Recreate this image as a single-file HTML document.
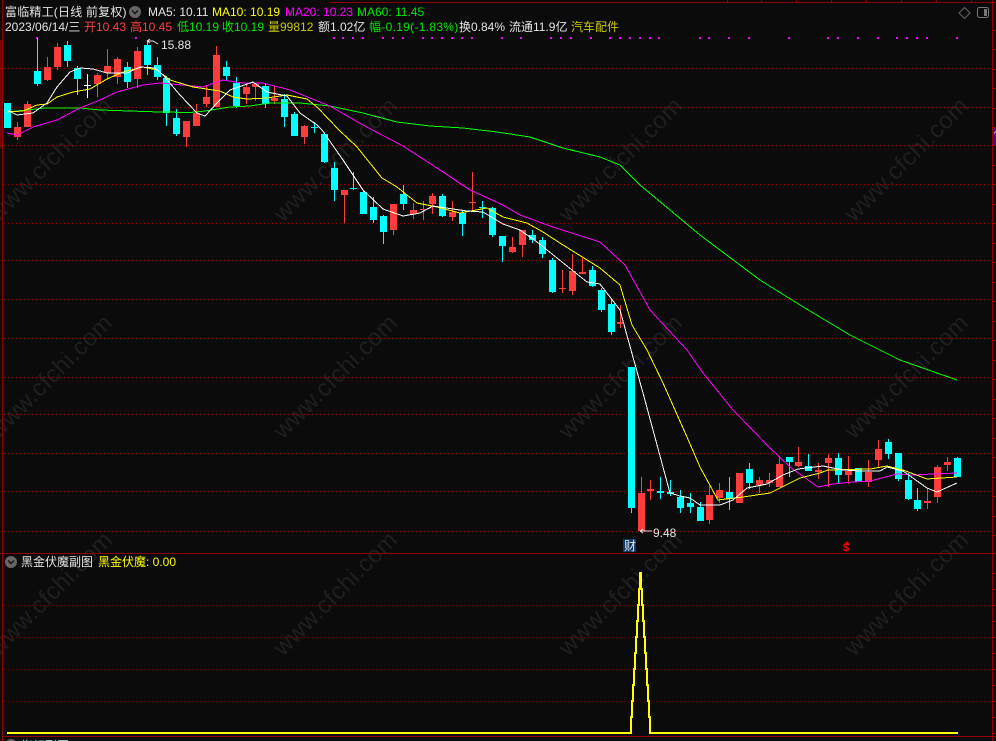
<!DOCTYPE html>
<html><head><meta charset="utf-8"><style>
html,body{margin:0;padding:0;background:#0b0b0b}
#a{position:relative;width:996px;height:741px;overflow:hidden;background:#0b0b0b;font:12px "Liberation Sans","WenQuanYi Zen Hei","Noto Sans CJK SC",sans-serif}
svg{position:absolute;left:0;top:0}
.t{position:absolute;white-space:pre;line-height:14px;height:14px;letter-spacing:0}
.w{color:#e4e4e4}.y{color:#ffff00}.m{color:#ff00ff}.g{color:#00e600}.r{color:#ff4040}.o{color:#c8c800}
</style></head><body><div id="a">
<svg width="996" height="741" viewBox="0 0 996 741">
<defs>
<pattern id="d1" width="4" height="1" patternUnits="userSpaceOnUse"><rect width="1" height="1" fill="#a00000"/></pattern>
<pattern id="d2" width="4" height="1" patternUnits="userSpaceOnUse"><rect width="1" height="1" fill="#800000"/></pattern>
</defs>
<g font-family="Liberation Sans,sans-serif" font-size="24" letter-spacing=".4" fill="#1f1f1f">
<text transform="translate(-2 223) rotate(-45)">www.cfchi.com</text>
<text transform="translate(283 223) rotate(-45)">www.cfchi.com</text>
<text transform="translate(568 223) rotate(-45)">www.cfchi.com</text>
<text transform="translate(854 223) rotate(-45)">www.cfchi.com</text>
<text transform="translate(-2 440) rotate(-45)">www.cfchi.com</text>
<text transform="translate(283 440) rotate(-45)">www.cfchi.com</text>
<text transform="translate(568 440) rotate(-45)">www.cfchi.com</text>
<text transform="translate(854 440) rotate(-45)">www.cfchi.com</text>
<text transform="translate(-2 657) rotate(-45)">www.cfchi.com</text>
<text transform="translate(283 657) rotate(-45)">www.cfchi.com</text>
<text transform="translate(568 657) rotate(-45)">www.cfchi.com</text>
<text transform="translate(854 657) rotate(-45)">www.cfchi.com</text>
</g>
<g shape-rendering="crispEdges" fill="none">
<g fill="url(#d1)">
<rect x="4" y="68" width="988" height="1"/><rect x="4" y="107" width="988" height="1"/><rect x="4" y="145" width="988" height="1"/><rect x="4" y="184" width="988" height="1"/><rect x="4" y="223" width="988" height="1"/><rect x="4" y="260" width="988" height="1"/><rect x="4" y="299" width="988" height="1"/><rect x="4" y="338" width="988" height="1"/><rect x="4" y="377" width="988" height="1"/><rect x="4" y="414" width="988" height="1"/><rect x="4" y="453" width="988" height="1"/><rect x="4" y="491" width="988" height="1"/><rect x="4" y="531" width="988" height="1"/>
</g>
<g fill="url(#d2)">
<rect x="4" y="605" width="988" height="1"/><rect x="4" y="637" width="988" height="1"/><rect x="4" y="669" width="988" height="1"/><rect x="4" y="701" width="988" height="1"/>
</g>
<path stroke="#900000" d="M2.5 0V741M992.5 0V741M330 2.5H996M0 553.5H996M2 736.5H996M727.5 0V2M761.5 0V2M796.5 0V2M831.5 0V2M866.5 0V2M901.5 0V2M936.5 0V2M971.5 0V2"/>
<path stroke="#900000" d="M992 30.5h4M992 49.5h4M992 69.5h4M992 88.5h4M992 108.5h4M992 127.5h4M992 145.5h4M992 165.5h4M992 184.5h4M992 204.5h4M992 223.5h4M992 243.5h4M992 262.5h4M992 282.5h4M992 301.5h4M992 321.5h4M992 340.5h4M992 360.5h4M992 379.5h4M992 399.5h4M992 418.5h4M992 438.5h4M992 457.5h4M992 477.5h4M992 496.5h4M992 516.5h4M992 535.5h4M992 573.5h4M992 589.5h4M992 605.5h4M992 621.5h4M992 637.5h4M992 653.5h4M992 669.5h4M992 685.5h4M992 701.5h4M992 717.5h4M992 733.5h4"/>
<rect x="0" y="40" width="2" height="108" fill="#7a0000"/>
<rect x="993" y="128" width="3" height="17" fill="#4a0a80"/>
<path stroke="#fff" d="M994 133h1M995 132h1"/>
<path fill="#ff00ff" d="M36 37h2v2h-2zM135 37h2v2h-2zM333 37h2v2h-2zM342 37h2v2h-2zM352 37h2v2h-2zM362 37h2v2h-2zM382 37h2v2h-2zM392 37h2v2h-2zM402 37h2v2h-2zM422 37h2v2h-2zM431 37h2v2h-2zM441 37h2v2h-2zM451 37h2v2h-2zM461 37h2v2h-2zM471 37h2v2h-2zM501 37h2v2h-2zM520 37h2v2h-2zM550 37h2v2h-2zM560 37h2v2h-2zM570 37h2v2h-2zM590 37h2v2h-2zM609 37h2v2h-2zM619 37h2v2h-2zM629 37h2v2h-2zM639 37h2v2h-2zM649 37h2v2h-2zM658 37h2v2h-2zM699 37h2v2h-2zM708 37h2v2h-2zM728 37h2v2h-2zM748 37h2v2h-2zM788 37h2v2h-2zM827 37h2v2h-2zM837 37h2v2h-2zM857 37h2v2h-2zM877 37h2v2h-2zM896 37h2v2h-2zM906 37h2v2h-2zM916 37h2v2h-2zM926 37h2v2h-2zM956 37h2v2h-2z"/>
<path stroke="#00ffff" d="M37.5 38V86M67.5 41V67M77.5 66V95M127.5 62V88M147.5 40V75M157.5 57V80M166.5 76V126M176.5 109V136M226.5 61V80M236.5 77V108M265.5 84V108M284.5 94V127M294.5 112V136M314.5 122V133M324.5 132V163M334.5 162V201M353.5 172V190M363.5 190V214M373.5 197V223M383.5 215V244M403.5 185V210M442.5 194V217M462.5 211V236M482.5 201V218M492.5 207V237M502.5 236V262M532.5 230V243M542.5 237V258M552.5 258V293M592.5 266V287M601.5 288V312M611.5 298V335M631.5 367V513M660.5 477V499M670.5 480V496M680.5 490V513M690.5 493V513M700.5 502V521M729.5 477V510M749.5 463V489M789.5 457V477M808.5 454V471M838.5 453V483M858.5 468V482M888.5 439V459M898.5 453V481M908.5 473V500M917.5 488V511M957.5 457V477"/>
<path stroke="#ff3c3c" d="M17.5 122V140M27.5 101V127M47.5 57V81M57.5 43V70M97.5 73V97M107.5 49V80M117.5 57V84M137.5 47V88M186.5 121V147M196.5 104V126M206.5 85V107M216.5 46V107M246.5 83V104M255.5 84V101M274.5 86V104M304.5 125V144M344.5 190V223M393.5 204V235M413.5 203V219M423.5 201V220M432.5 193V214M452.5 201V221M472.5 172V211M512.5 237V253M522.5 230V257M562.5 270V293M572.5 254V295M582.5 257V274M620.5 305V328M641.5 477V531M650.5 480V500M709.5 486V524M719.5 483V503M739.5 473V503M759.5 477V493M769.5 473V487M779.5 456V487M798.5 447V467M818.5 463V479M828.5 454V487M848.5 456V484M868.5 460V487M878.5 440V467M927.5 488V509M937.5 465V503M947.5 457V471"/>
<path stroke="#fff" d="M87.5 74V98M84 85.5h7"/>
<path fill="#00ffff" d="M4 103h7v25h-7zM34 71h7v13h-7zM64 45h7v16h-7zM74 68h7v11h-7zM124 67h7v15h-7zM144 45h7v20h-7zM154 65h7v12h-7zM163 78h7v35h-7zM173 118h7v16h-7zM223 67h7v9h-7zM233 83h7v23h-7zM262 86h7v18h-7zM281 99h7v18h-7zM291 114h7v22h-7zM311 127h7v1h-7zM321 134h7v28h-7zM331 168h7v22h-7zM350 188h7v1h-7zM360 192h7v22h-7zM370 207h7v13h-7zM380 216h7v16h-7zM400 194h7v10h-7zM439 196h7v20h-7zM459 213h7v11h-7zM479 207h7v1h-7zM489 208h7v27h-7zM499 236h7v10h-7zM529 235h7v5h-7zM539 240h7v14h-7zM549 260h7v32h-7zM589 270h7v16h-7zM598 290h7v20h-7zM608 304h7v28h-7zM628 367h7v141h-7zM657 491h7v2h-7zM667 492h7v2h-7zM677 497h7v11h-7zM687 503h7v4h-7zM697 507h7v14h-7zM726 492h7v7h-7zM746 469h7v14h-7zM786 457h7v5h-7zM805 466h7v5h-7zM835 458h7v17h-7zM855 468h7v14h-7zM885 442h7v12h-7zM895 453h7v26h-7zM905 480h7v19h-7zM914 500h7v9h-7zM954 458h7v19h-7z"/>
<path fill="#ff3c3c" d="M14 127h7v10h-7zM24 104h7v23h-7zM44 67h7v13h-7zM54 47h7v20h-7zM94 75h7v9h-7zM104 66h7v7h-7zM114 59h7v18h-7zM134 51h7v28h-7zM183 121h7v16h-7zM193 113h7v13h-7zM203 97h7v7h-7zM213 55h7v52h-7zM243 87h7v7h-7zM252 84h7v3h-7zM271 98h7v3h-7zM301 126h7v11h-7zM341 190h7v5h-7zM390 204h7v26h-7zM410 210h7v4h-7zM420 209h7v1h-7zM429 196h7v8h-7zM449 212h7v5h-7zM469 202h7v1h-7zM509 247h7v5h-7zM519 230h7v15h-7zM559 288h7v1h-7zM569 271h7v20h-7zM579 272h7v2h-7zM617 322h7v2h-7zM638 493h7v38h-7zM647 489h7v2h-7zM706 495h7v25h-7zM716 490h7v8h-7zM736 473h7v30h-7zM756 480h7v5h-7zM766 480h7v3h-7zM776 464h7v23h-7zM795 462h7v4h-7zM815 470h7v2h-7zM825 458h7v5h-7zM845 471h7v4h-7zM865 472h7v10h-7zM875 449h7v11h-7zM924 501h7v2h-7zM934 467h7v30h-7zM944 462h7v3h-7z"/>
</g>
<g fill="none" stroke-width="1" shape-rendering="crispEdges">
<polyline stroke="#00ff00" points="7,112 27,110 45,108 80,108 100,110 160,112 190,112.5 205,111 230,107 250,106 270,103 300,103 330,106 363,113 397,122 430,126 463,128 497,132 530,137 563,148 600,157 620,165 640,185 700,235 760,280 800,305 850,335 900,360 957,380"/>
<polyline stroke="#ff00ff" points="7,133 17,135 33,127 57,120 80,108 100,100 117,92 143,85 160,83 183,85 203,87 223,80 243,83 263,83 290,90 310,98 330,106 363,125 403,146 437,168 470,190 503,205 520,215 553,227 600,242 625,265 650,310 687,350 703,373 733,410 770,448 790,467 818,487 833,484 853,482 870,481 897,474 913,475 933,474 957,473"/>
<polyline stroke="#ffff00" points="7,112 23,111 37,105 47,104 57,97 73,92 90,89 107,79 123,72 143,67 157,70 170,80 193,87 220,91 233,97 247,99 267,98 287,95 307,99 317,107 339,130 357,147 382,178 397,187 417,203 437,207 460,213 487,208 503,217 527,223 543,232 563,245 600,268 620,285 632,325 647,350 663,383 687,437 700,467 718,500 743,497 770,493 800,478 820,473 828,470 870,469 887,466 903,470 927,479 957,477"/>
<polyline stroke="#ffffff" points="7,110 17,115 33,113 47,103 57,87 70,72 80,68 93,69 107,73 127,73 140,67 155,68 163,75 180,95 197,113 205,116 217,103 230,90 253,82 267,92 287,96 300,113 317,125 322,130 343,160 363,190 383,209 403,216 420,213 433,206 453,209 467,211 483,212 503,224 520,230 537,242 557,258 587,282 600,284 620,310 631,350 643,393 670,493 680,496 690,498 700,505 720,505 733,500 747,488 767,484 783,475 798,469 823,466 843,470 860,471 880,471 887,467 903,471 927,488 937,492 957,483"/>
</g>
<path fill="none" stroke="#ffff00" stroke-width="2" shape-rendering="crispEdges" d="M7 733H631V717H632V701H633V685H634V669H635V653H636V637H637V621H638V605H639V589H640V573H641V589H642V605H643V621H644V637H645V653H646V669H647V685H648V701H649V717H650V733H958"/>
<path fill="none" stroke="#e0e0e0" d="M147 41L150 39M147 41L150 43M147 41H153L158 44"/>
<path fill="none" stroke="#e0e0e0" d="M640 531L643 529M640 531L643 533M640 531H652"/>
<circle cx="135" cy="12" r="6" fill="#666"/><path d="M132 10.5l3 3 3-3" fill="none" stroke="#111" stroke-width="1.4"/>
<circle cx="11" cy="562" r="6" fill="#666"/><path d="M8 560.5l3 3 3-3" fill="none" stroke="#111" stroke-width="1.4"/>
<circle cx="11" cy="745" r="6" fill="#666"/>
<path d="M964.5 7.5L970 13L964.5 18.5L959 13Z" fill="none" stroke="#666"/>
<rect x="977.5" y="7.5" width="11" height="10" rx="2" fill="none" stroke="#777"/><rect x="984" y="9" width="3" height="7" fill="#777"/>
<rect x="623" y="539" width="13" height="13" fill="#0e3a6a"/>
<path d="M847 541L850 545H844Z" fill="#f00"/>
</svg>
<span class="t w" style="left:5px;top:5px;letter-spacing:.2px">富临精工(日线 前复权)</span>
<span class="t w" style="left:148px;top:5px">MA5: 10.11</span>
<span class="t y" style="left:212px;top:5px">MA10: 10.19</span>
<span class="t m" style="left:285px;top:5px">MA20: 10.23</span>
<span class="t g" style="left:357px;top:5px">MA60: 11.45</span>
<span class="t w" style="left:5px;top:20px">2023/06/14/三</span>
<span class="t r" style="left:84px;top:20px">开10.43</span>
<span class="t r" style="left:130px;top:20px">高10.45</span>
<span class="t g" style="left:177px;top:20px">低10.19</span>
<span class="t g" style="left:222px;top:20px">收10.19</span>
<span class="t o" style="left:268px;top:20px">量99812</span>
<span class="t w" style="left:318px;top:20px">额1.02亿</span>
<span class="t g" style="left:369px;top:20px;letter-spacing:.3px">幅-0.19(-1.83%)</span>
<span class="t w" style="left:459px;top:20px">换0.84%</span>
<span class="t w" style="left:509px;top:20px">流通11.9亿</span>
<span class="t o" style="left:571px;top:20px">汽车配件</span>
<span class="t w" style="left:161px;top:38px">15.88</span>
<span class="t w" style="left:653px;top:526px">9.48</span>
<span class="t w" style="left:624px;top:539px">财</span>
<span class="t" style="left:843px;top:541px;color:#f00;font-weight:bold;font-size:11px">$</span>
<span class="t w" style="left:21px;top:555px">黑金伏魔副图</span>
<span class="t y" style="left:98px;top:555px">黑金伏魔: 0.00</span>
<span class="t w" style="left:21px;top:739px">指标副图 0.00 0.00</span>
</div></body></html>
